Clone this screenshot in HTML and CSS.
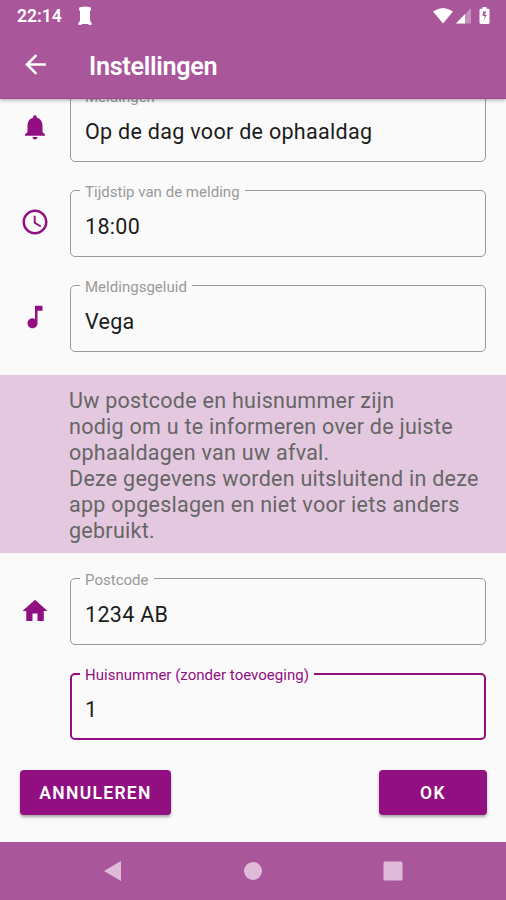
FILE: index.html
```html
<!DOCTYPE html>
<html lang="nl">
<head>
    <meta charset="UTF-8">
    <meta name="viewport" content="width=device-width, initial-scale=1.0">
    <title>Instellingen</title>
    <link rel="stylesheet" href="styles.css">
</head>
<body>

    <header class="header">
        <div class="status-bar">
            <span class="time">22:14</span>
            <svg class="app-icon" width="14" height="20" viewBox="0 0 14 20"><path d="M1 2Q2 .5 7 .5T13 2V4.500H12V15L13.500 16.500V19H11L10 18H4L3 19H.5V16.500L2 15V4.500H1Z"/></svg>
            <svg class="wifi" width="20" height="16" viewBox="0 0 20 16"><path d="M0 3.500Q10-3.500 20 3.500L10 15.500Z"/></svg>
            <svg class="signal" width="15" height="16" viewBox="0 0 15 16"><path d="M15 0V15.500H0Z" opacity=".35"/><path d="M9 6V15.500H0Z"/></svg>
            <svg class="battery" width="11" height="17" viewBox="0 0 11 17"><path d="M3.500 0H7.500V1.700H9Q10.500 1.700 10.500 3V15.500Q10.500 17 9 17H2Q.5 17 .5 15.500V3Q.5 1.700 2 1.700H3.500Z"/><path class="bolt" d="M7.500 4.500H4L3.600 9H6L4.500 13.500L8 7.800H5.500Z"/></svg>
        </div>
        <div class="toolbar">
            <svg class="back" width="31" height="31" viewBox="0 0 24 24"><path d="M20 11H7.830l5.590-5.590L12 4l-8 8 8 8 1.410-1.410L7.830 13H20v-2z"/></svg>
            <h1>Instellingen</h1>
        </div>
    </header>

    <main class="content">
        <div class="row">
            <svg class="icon" width="30" height="30" viewBox="0 0 24 24"><path d="M12 22c1.100 0 2-.9 2-2h-4c0 1.100.89 2 2 2zm6-6v-5c0-3.070-1.640-5.640-4.500-6.320V4c0-.83-.67-1.500-1.500-1.500s-1.500.67-1.500 1.500v.68C7.630 5.360 6 7.920 6 11v5l-2 2v1h16v-1l-2-2z"/></svg>
            <fieldset class="field">
                <legend>Meldingen</legend>
                <div class="value">Op de dag voor de ophaaldag</div>
            </fieldset>
        </div>
        <div class="row">
            <svg class="icon" width="30" height="30" viewBox="0 0 24 24"><path d="M11.990 2C6.470 2 2 6.480 2 12s4.470 10 9.990 10C17.520 22 22 17.520 22 12S17.520 2 11.990 2zM12 20c-4.420 0-8-3.580-8-8s3.580-8 8-8 8 3.580 8 8-3.580 8-8 8zm.5-13H11v6l5.250 3.150.75-1.230-4.500-2.670z"/></svg>
            <fieldset class="field">
                <legend>Tijdstip van de melding</legend>
                <div class="value">18:00</div>
            </fieldset>
        </div>
        <div class="row">
            <svg class="icon" width="30" height="30" viewBox="0 0 24 24"><path d="M12 3v10.550c-.59-.34-1.270-.55-2-.55-2.210 0-4 1.790-4 4s1.790 4 4 4 4-1.790 4-4V7h4V3h-6z"/></svg>
            <fieldset class="field">
                <legend>Meldingsgeluid</legend>
                <div class="value">Vega</div>
            </fieldset>
        </div>

        <p class="notice">
            Uw postcode en huisnummer zijn<br>
            nodig om u te informeren over de juiste<br>
            ophaaldagen van uw afval.<br>
            Deze gegevens worden uitsluitend in deze<br>
            app opgeslagen en niet voor iets anders<br>
            gebruikt.
        </p>

        <div class="row">
            <svg class="icon home" width="30" height="30" viewBox="0 0 24 24"><path d="M10 20v-6h4v6h5v-8h3L12 3 2 12h3v8z"/></svg>
            <fieldset class="field">
                <legend>Postcode</legend>
                <div class="value">1234 AB</div>
            </fieldset>
        </div>
        <div class="row">
            <span class="icon"></span>
            <fieldset class="field focused">
                <legend>Huisnummer (zonder toevoeging)</legend>
                <div class="value">1</div>
            </fieldset>
        </div>

        <div class="buttons">
            <button class="cancel">ANNULEREN</button>
            <button class="ok">OK</button>
        </div>
    </main>

    <nav class="nav-bar">
        <svg width="20" height="22" viewBox="0 0 20 22"><path d="M1 11L18 1V21Z"/></svg>
        <svg width="20" height="20" viewBox="0 0 20 20"><circle cx="10" cy="10" r="9"/></svg>
        <svg width="20" height="20" viewBox="0 0 20 20"><rect x=".5" y=".5" width="19" height="19" rx="1.500"/></svg>
    </nav>

</body>
</html>
```

FILE: styles.css
```css
* {
    box-sizing: border-box;
}

body {
    display: flex;
    flex-direction: column;
    height: 900px;
    margin: 0;
    overflow: hidden;
    background-color: #fafafa;
    font-family: Roboto, sans-serif;
}

svg {
    display: block;
    flex: none;
}

/* Header */
.header {
    position: relative;
    z-index: 1;
    flex: none;
    height: 99px;
    background-color: #aa569b;
    border-bottom: 1px solid #a1458f;
    box-shadow: 0 1px 4px rgba(0, 0, 0, 0.35);
    color: white;
    fill: white;
}

.status-bar {
    display: flex;
    align-items: center;
    height: 31px;
    padding: 0 16px 0 17px;
}

.time {
    font-size: 17.500px;
    font-weight: 600;
}

.app-icon {
    margin-left: 16px;
}

.wifi {
    margin-left: auto;
}

.signal {
    margin: 0 8px 0 3px;
}

.bolt {
    fill: #aa569b;
}

.toolbar {
    display: flex;
    align-items: center;
    height: 67px;
    padding-left: 20px;
}

h1 {
    margin: 3px 0 0 38px;
    font-size: 25.200px;
    font-weight: 600;
    letter-spacing: -0.3px;
}

/* Form */
.content {
    flex: 1;
    min-height: 0;
    padding-right: 20px;
}

.row {
    display: grid;
    grid-template-columns: 70px 1fr;
    align-items: center;
    margin-bottom: 25.200px;
}

.row:first-child {
    margin-top: -7px;
}

.icon {
    justify-self: center;
    margin: 0 1px 1px 0;
    fill: #920f82;
}

.home {
    margin-bottom: -1px;
}

.field {
    min-width: 0;
    height: 70px;
    margin: 0;
    padding: 0 9px;
    border: 1px solid #999;
    border-radius: 5px;
}

legend {
    padding: 3px 5px 0;
    color: #999;
    font-size: 15px;
    line-height: 4px;
    letter-spacing: 0.02px;
    white-space: nowrap;
}

.value {
    padding: 18px 5px 0;
    color: #1c1c1c;
    font-size: 21.500px;
    line-height: 30px;
    letter-spacing: 0.3px;
}

.focused {
    padding: 0 8px;
    border: 2px solid #920f82;
}

.focused legend {
    color: #920f82;
}

.notice {
    margin: -2.400px -20px 22px 0;
    padding: 13px 0 9.500px 69px;
    background-color: #e4c8df;
    color: #666;
    font-size: 21.500px;
    line-height: 25.900px;
    letter-spacing: 0.27px;
    white-space: nowrap;
}

/* Buttons */
.buttons {
    display: flex;
    justify-content: space-between;
    margin: 30px -1px 0 0;
    padding-left: 20px;
}

button {
    height: 45px;
    padding: 0;
    background-color: #920f82;
    border: none;
    border-radius: 4px;
    box-shadow: 0 2px 3px rgba(0, 0, 0, 0.35);
    color: white;
    font-family: inherit;
    font-size: 17.500px;
    font-weight: 600;
    letter-spacing: 1.300px;
}

.cancel {
    width: 151px;
}

.ok {
    width: 108px;
}

/* Navigation bar */
.nav-bar {
    display: flex;
    flex: none;
    align-items: center;
    justify-content: center;
    gap: 120px;
    height: 58px;
    background-color: #aa569b;
    fill: #dfbbd9;
}
```
